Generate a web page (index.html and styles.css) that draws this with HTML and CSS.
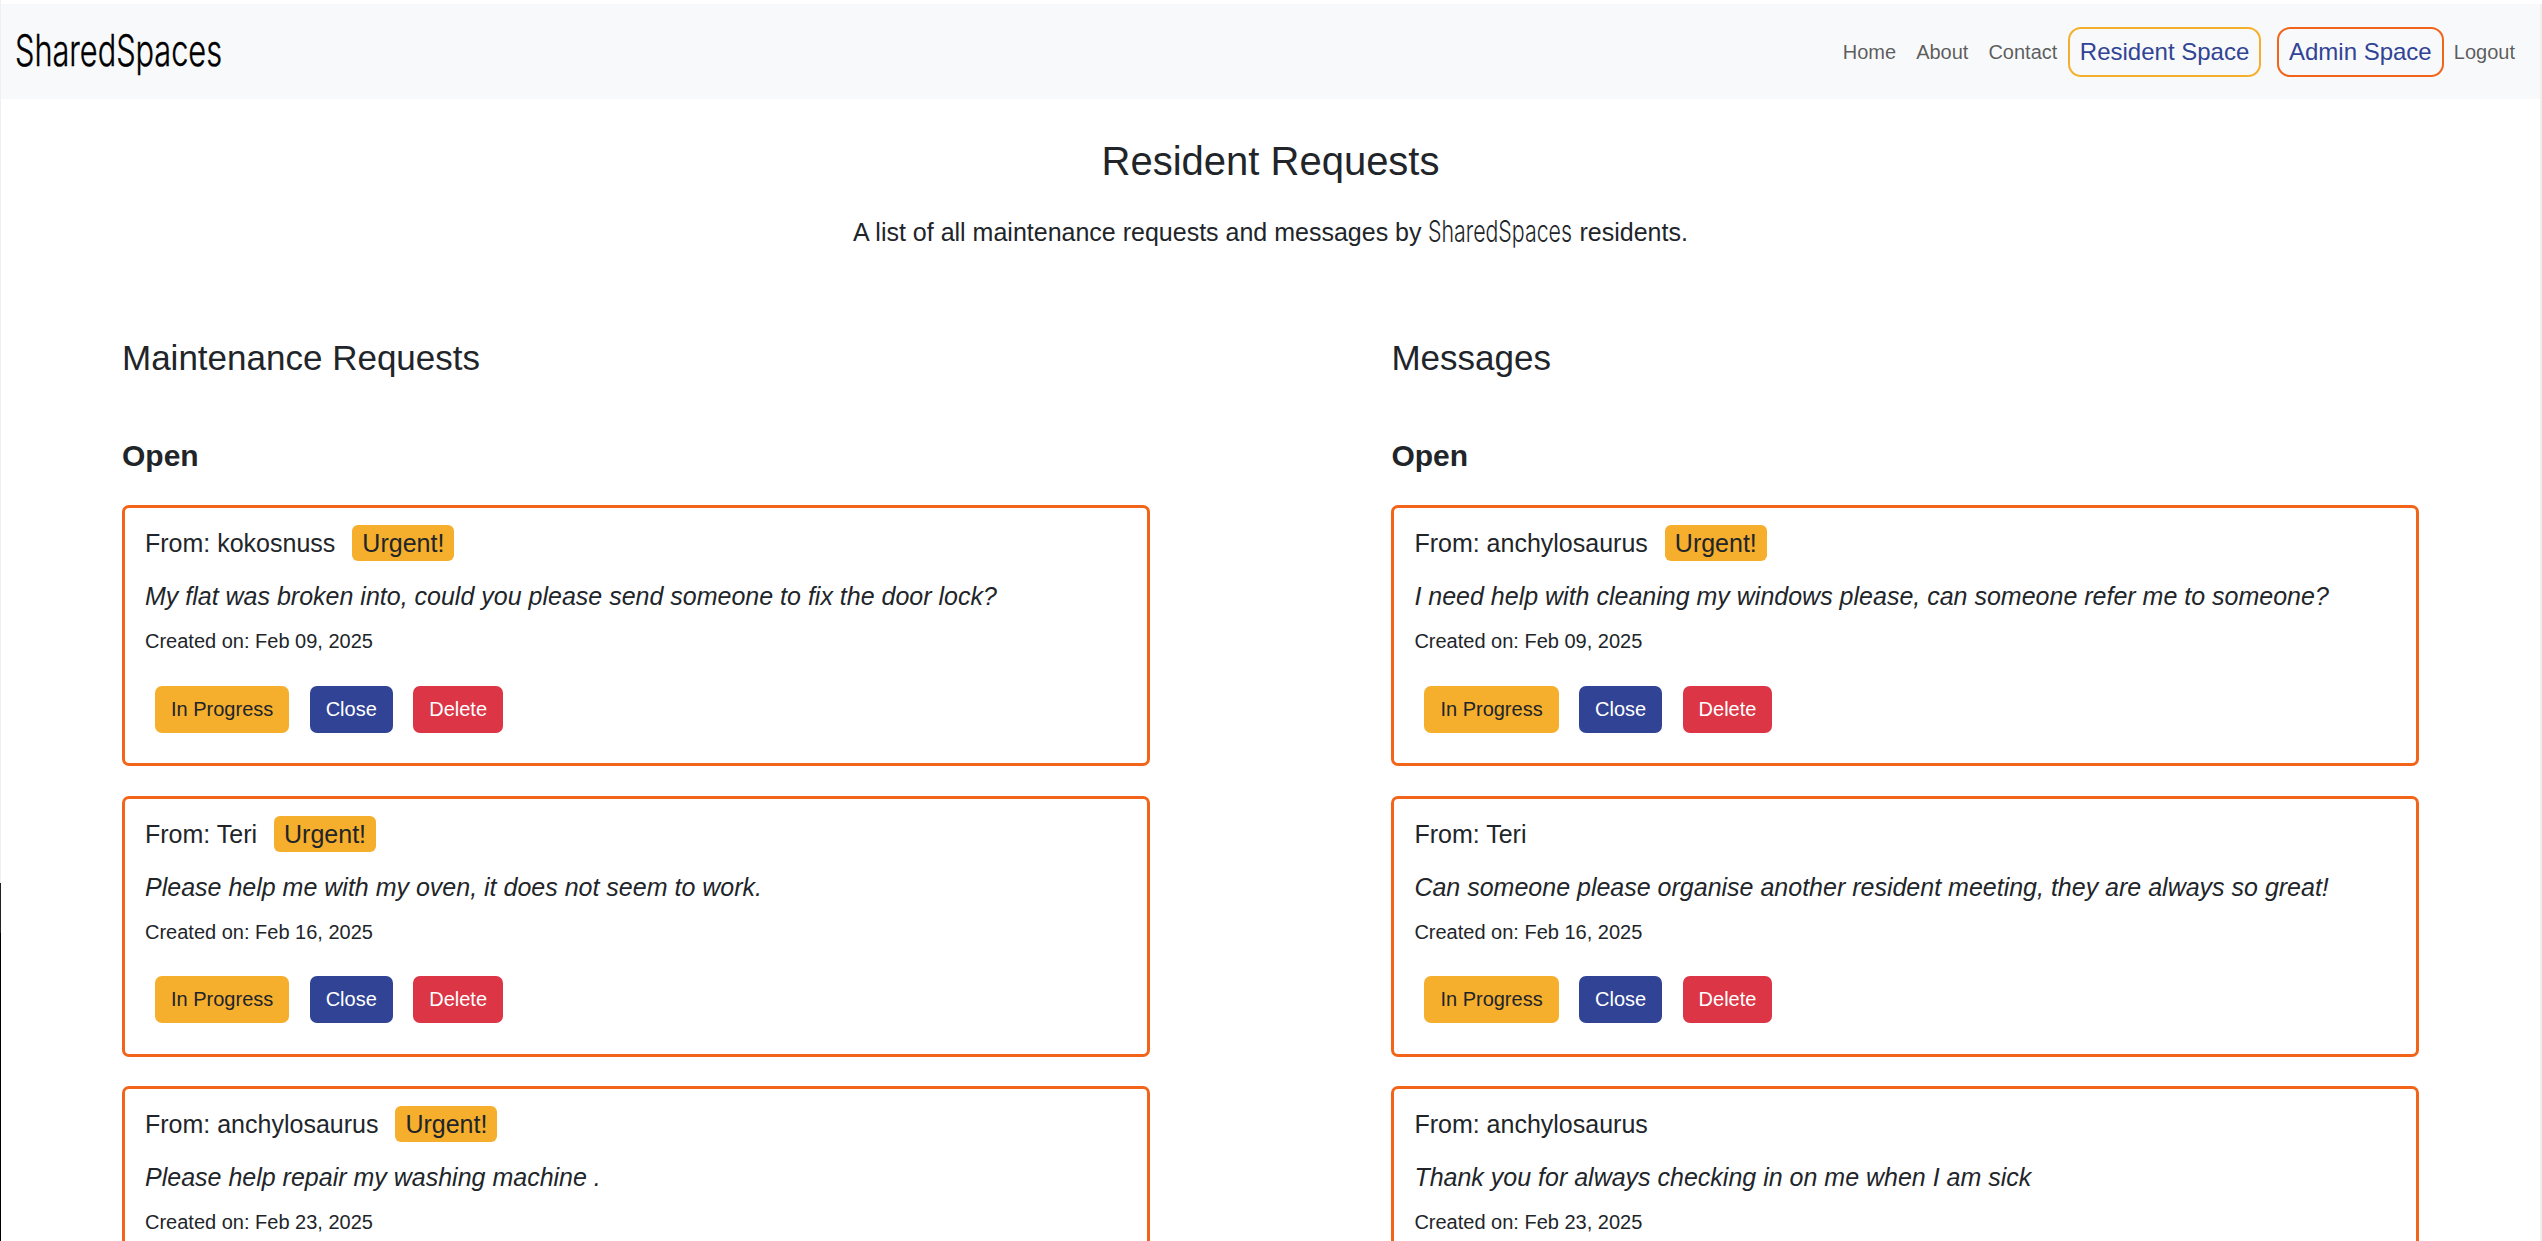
FILE: index.html
```html
<!DOCTYPE html>
<html lang="en">
<head>
<meta charset="utf-8">
<title>SharedSpaces - Resident Requests</title>
<link rel="stylesheet" href="styles.css">
</head>
<body>
<div class="page">
  <nav class="navbar">
    <a class="brand"><svg width="210" height="70" viewBox="0 0 210 70"><text x="0" y="49" textLength="207" lengthAdjust="spacingAndGlyphs">SharedSpaces</text></svg></a>
    <div class="links">
      <a class="link">Home</a>
      <a class="link">About</a>
      <a class="link">Contact</a>
      <a class="pill resident">Resident Space</a>
      <a class="pill admin">Admin Space</a>
      <a class="link">Logout</a>
    </div>
  </nav>
  <header class="intro">
    <h1>Resident Requests</h1>
    <p><span>A list of all maintenance requests and messages by</span><svg class="wordmark" width="145" height="44" viewBox="0 0 145 44"><text x="0" y="31.5" textLength="144" lengthAdjust="spacingAndGlyphs">SharedSpaces</text></svg><span>residents.</span></p>
  </header>
  <main class="columns">
    <section>
      <h2>Maintenance Requests</h2>
      <h3>Open</h3>
      <article class="card">
        <div class="from">From: kokosnuss <span class="badge">Urgent!</span></div>
        <p class="message">My flat was broken into, could you please send someone to fix the door lock?</p>
        <p class="date">Created on: Feb 09, 2025</p>
        <div class="actions"><button class="btn progress">In Progress</button><button class="btn close">Close</button><button class="btn delete">Delete</button></div>
      </article>
      <article class="card">
        <div class="from">From: Teri <span class="badge">Urgent!</span></div>
        <p class="message">Please help me with my oven, it does not seem to work.</p>
        <p class="date">Created on: Feb 16, 2025</p>
        <div class="actions"><button class="btn progress">In Progress</button><button class="btn close">Close</button><button class="btn delete">Delete</button></div>
      </article>
      <article class="card">
        <div class="from">From: anchylosaurus <span class="badge">Urgent!</span></div>
        <p class="message">Please help repair my washing machine .</p>
        <p class="date">Created on: Feb 23, 2025</p>
      </article>
    </section>
    <section>
      <h2>Messages</h2>
      <h3>Open</h3>
      <article class="card">
        <div class="from">From: anchylosaurus <span class="badge">Urgent!</span></div>
        <p class="message">I need help with cleaning my windows please, can someone refer me to someone?</p>
        <p class="date">Created on: Feb 09, 2025</p>
        <div class="actions"><button class="btn progress">In Progress</button><button class="btn close">Close</button><button class="btn delete">Delete</button></div>
      </article>
      <article class="card">
        <div class="from">From: Teri</div>
        <p class="message">Can someone please organise another resident meeting, they are always so great!</p>
        <p class="date">Created on: Feb 16, 2025</p>
        <div class="actions"><button class="btn progress">In Progress</button><button class="btn close">Close</button><button class="btn delete">Delete</button></div>
      </article>
      <article class="card">
        <div class="from">From: anchylosaurus</div>
        <p class="message">Thank you for always checking in on me when I am sick</p>
        <p class="date">Created on: Feb 23, 2025</p>
      </article>
    </section>
  </main>
</div>
</body>
</html>
```
FILE: styles.css
```css
* { box-sizing: border-box; }
body {
  margin: 0;
  height: 1241px;
  padding: 4px 2px 0 1px;
  background:
    linear-gradient(#f0f0f0 883px, #222 883px, #222 933px, #000 933px) left top / 1px 100% no-repeat,
    linear-gradient(#f0f0f0, #f0f0f0) right 4px / 2px 100% no-repeat,
    #fff;
  font-family: "Liberation Sans", Arial, sans-serif;
  font-size: 20px;
  color: #212529;
}
h1, h2, h3, p { margin: 0; font-weight: 400; }
.page { height: 1237px; overflow: hidden; }

.navbar {
  display: flex;
  justify-content: space-between;
  align-items: center;
  height: 95px;
  padding: 0 15px 0 14px;
  background: #f8f9fa;
}
.brand { display: flex; }
svg { overflow: visible; }
svg text { font-family: Inter, sans-serif; }
.brand text { font-size: 44px; font-weight: 300; fill: #000; stroke: #000; stroke-width: .4px; }
.links { display: flex; align-items: center; }
.link { padding: 0 10px; line-height: 30px; color: rgba(0, 0, 0, .65); }
.pill {
  display: flex;
  align-items: center;
  justify-content: center;
  height: 50px;
  border: 2px solid;
  border-radius: 13px;
  font-size: 24px;
  color: #314395;
}
.resident { width: 192.5px; margin: 0 16px 0 1px; border-color: #f6ae2d; }
.admin { width: 167px; border-color: #f26419; }

.intro { padding-top: 38px; text-align: center; }
.intro h1 { font-size: 40px; line-height: 48px; }
.intro p {
  display: flex;
  justify-content: center;
  align-items: center;
  gap: 6.5px;
  height: 38px;
  margin: 28px 0 1px;
  font-size: 25px;
  line-height: 38px;
}
.wordmark text { font-size: 30px; font-weight: 300; fill: #212529; }

.columns {
  display: grid;
  grid-template-columns: 1028px 1028px;
  column-gap: 241.4px;
  padding: 85px 0 0 121px;
}
h2 { font-size: 35px; line-height: 42px; }
h3 { margin: 59px 0 31px; font-size: 30px; line-height: 36px; font-weight: 700; }
.card {
  height: 261px;
  margin-bottom: 29.5px;
  padding: 17px 20px 0;
  border: 3px solid #f26419;
  border-radius: 7px;
}
.from { display: flex; gap: 17px; font-size: 25px; line-height: 36px; }
.badge { padding: 0 10px; border-radius: 6px; background: #f6ae2d; }
.message { margin-top: 20px; font-size: 25px; line-height: 30px; font-style: italic; white-space: nowrap; }
.date { margin-top: 18px; line-height: 24px; }
.actions { display: flex; gap: 20.4px; margin: 32.9px 0 0 10px; }
.btn {
  height: 47px;
  padding: 0 16px;
  border: 0;
  border-radius: 7px;
  font: 20px "Liberation Sans", Arial, sans-serif;
}
.progress { background: #f6ae2d; color: #212529; }
.close { background: #314395; color: #fff; }
.delete { background: #dc3545; color: #fff; }
```
